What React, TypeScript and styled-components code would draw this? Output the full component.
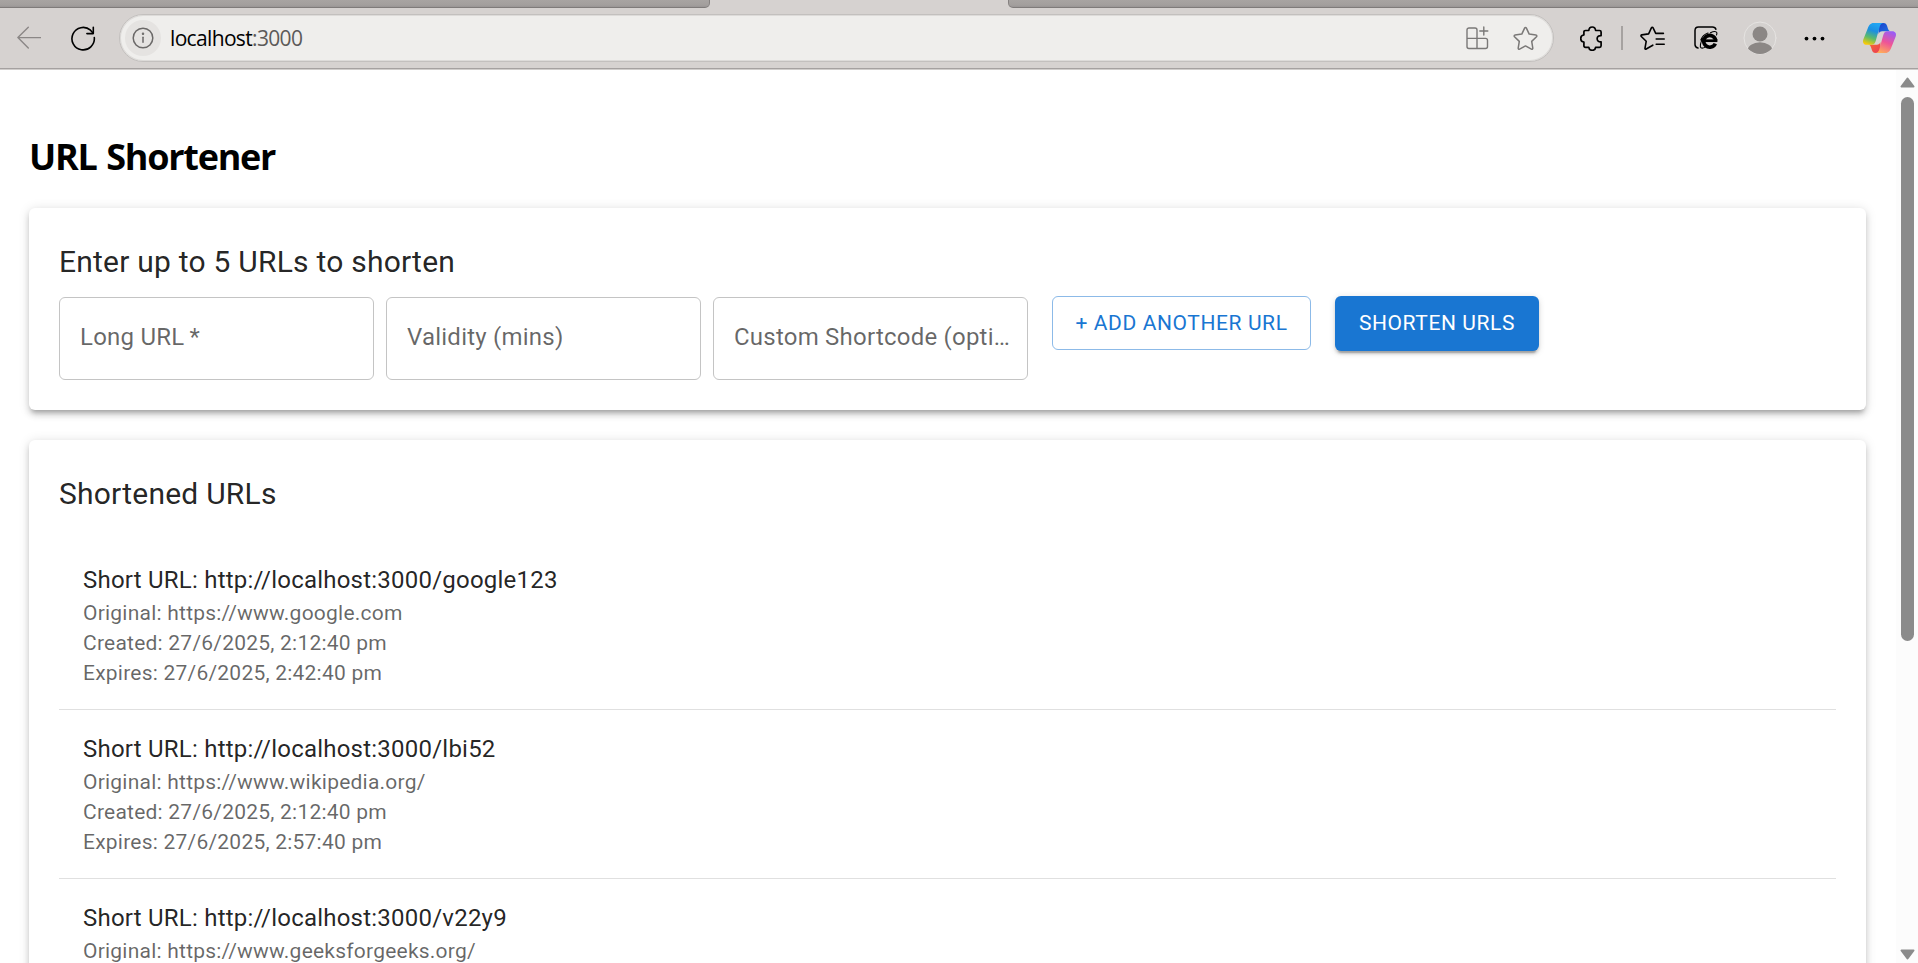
import React from 'react';
import styled, { createGlobalStyle } from 'styled-components';

const GlobalStyle = createGlobalStyle`
  *, *::before, *::after { box-sizing: border-box; }
  body { margin: 0; background: #fff; overflow: hidden; }
`;

const Browser = styled.div`
  display: flex;
  flex-direction: column;
  height: 963px;
  overflow: hidden;
  background: #fff;
`;

const TabStrip = styled.div`
  display: flex;
  justify-content: space-between;
  flex: none;
  height: 8px;
  background: #d6d2d0;
`;

const InactiveTabs = styled.div<{ $width: number; $side: 'left' | 'right' }>`
  width: ${(p) => p.$width}px;
  background: linear-gradient(#a8a4a2, #a39f9d 5px, #999594);
  border-bottom: 1px solid #7f7b7a;
  ${(p) =>
    p.$side === 'left'
      ? 'border-right: 1px solid #858180; border-bottom-right-radius: 5px;'
      : 'border-left: 1px solid #858180; border-bottom-left-radius: 5px;'}
`;

const Toolbar = styled.div`
  display: flex;
  align-items: center;
  flex: none;
  height: 62px;
  padding: 0 20px 1px 17px;
  background: #d6d2d0;
  border-bottom: 1px solid #d0cdcb;
  box-shadow: inset 0 -1px 0 #a5a1a0;
`;

const Icon = styled.svg<{ $gap?: number }>`
  display: block;
  flex: none;
  margin-left: ${(p) => p.$gap ?? 0}px;
  fill: none;
  stroke-linecap: round;
  stroke-linejoin: round;
`;

const AddressBar = styled.div`
  display: flex;
  align-items: center;
  flex: none;
  width: 1435px;
  height: 48px;
  margin-left: 23px;
  padding: 0 15px 0 5px;
  border: 1px solid #c3c0be;
  border-radius: 24px;
  background: #efeeec;
  box-shadow: inset 0 0 0 1px #dddbd9;
`;

const SiteInfo = styled.div`
  display: flex;
  align-items: center;
  justify-content: center;
  width: 36px;
  height: 36px;
  border-radius: 50%;
  background: #e5e3e1;
`;

const Address = styled.div`
  flex: 1;
  margin-left: 9px;
  font: 21px/28px 'Open Sans', sans-serif;
  letter-spacing: -0.66px;
  color: #000;
`;

const Port = styled.span`
  color: #5c5a59;
`;

const Separator = styled.div`
  width: 2px;
  height: 24px;
  margin-left: 18px;
  background: #a6a2a0;
`;

const Viewport = styled.div`
  display: flex;
  flex: 1;
  min-height: 0;
`;

const Page = styled.main`
  flex: 1;
  padding: 66px 30px 0 29px;
  overflow: hidden;
`;

const PageTitle = styled.h2`
  margin: 0 0 30px;
  height: 42px;
  font: 700 36px/41px 'Open Sans', sans-serif;
  letter-spacing: -1.25px;
  word-spacing: 1.5px;
  color: #000;
`;

const Card = styled.section`
  margin-bottom: 30px;
  padding: 30px;
  border-radius: 6px;
  background: #fff;
  box-shadow: 0 4.5px 4.5px -3px rgba(0, 0, 0, 0.2), 0 4.5px 6px 0 rgba(0, 0, 0, 0.14),
    0 1.5px 12px 0 rgba(0, 0, 0, 0.12);
`;

const CardTitle = styled.h6`
  margin: 0;
  font: 400 30px/48px Roboto, sans-serif;
  letter-spacing: 0.225px;
  color: rgba(0, 0, 0, 0.87);
`;

const FormRow = styled.div`
  display: flex;
  align-items: flex-start;
  margin-top: 10px;
`;

const Field = styled.div`
  width: 315px;
  height: 83px;
  margin: 1px 12px 0 0;
  padding: 22px 17px 0 20px;
  border: 1px solid #c4c4c4;
  border-radius: 6px;
`;

const FieldLabel = styled.div`
  overflow: hidden;
  white-space: nowrap;
  text-overflow: ellipsis;
  font: 400 24px/34px Roboto, sans-serif;
  letter-spacing: 0.225px;
  color: rgba(0, 0, 0, 0.6);
`;

const Button = styled.button<{ $filled?: boolean; $width: number }>`
  width: ${(p) => p.$width}px;
  height: ${(p) => (p.$filled ? 55 : 54)}px;
  margin: 0 12px;
  padding: ${(p) => (p.$filled ? '0 0 2px' : '0')};
  border: ${(p) => (p.$filled ? '0' : '1px solid rgba(25, 118, 210, 0.5)')};
  border-radius: 6px;
  background: ${(p) => (p.$filled ? '#1976d2' : 'transparent')};
  color: ${(p) => (p.$filled ? '#fff' : '#1976d2')};
  font: 400 21px/36px Roboto, sans-serif;
  letter-spacing: 0.6px;
  white-space: nowrap;
  box-shadow: ${(p) =>
    p.$filled
      ? '0 4.5px 1.5px -3px rgba(0,0,0,.2), 0 3px 3px 0 rgba(0,0,0,.14), 0 1.5px 7.5px 0 rgba(0,0,0,.12)'
      : 'none'};
`;

const List = styled.ul`
  list-style: none;
  margin: 23px 0 0;
  padding: 0;
`;

const ListItem = styled.li`
  height: 169px;
  padding: 21px 24px;
  border-bottom: 1px solid rgba(0, 0, 0, 0.12);
`;

const Primary = styled.div`
  font: 400 24px/36px Roboto, sans-serif;
  letter-spacing: 0.225px;
  color: rgba(0, 0, 0, 0.87);
`;

const Secondary = styled.div`
  font: 400 21px/30px Roboto, sans-serif;
  letter-spacing: 0.225px;
  color: rgba(0, 0, 0, 0.6);
`;

const Scrollbar = styled.div`
  display: flex;
  flex-direction: column;
  align-items: center;
  flex: none;
  width: 22px;
  padding: 7px 0 3px 1px;
  background: #fcfcfc;
`;

const Thumb = styled.div`
  width: 13px;
  height: 544px;
  margin: 9px 0 auto;
  border-radius: 7px;
  background: #8b8b8b;
`;

interface Entry {
  code: string;
  original: string;
  created?: string;
  expires?: string;
}

const entries: Entry[] = [
  {
    code: 'google123',
    original: 'https://www.google.com',
    created: '27/6/2025, 2:12:40 pm',
    expires: '27/6/2025, 2:42:40 pm',
  },
  {
    code: 'lbi52',
    original: 'https://www.wikipedia.org/',
    created: '27/6/2025, 2:12:40 pm',
    expires: '27/6/2025, 2:57:40 pm',
  },
  { code: 'v22y9', original: 'https://www.geeksforgeeks.org/' },
];

const BackIcon = () => (
  <Icon width="24" height="24" viewBox="0 0 24 24" stroke="#8b8786" strokeWidth="1.4">
    <path d="M11.3 1.3.9 11.6 11.3 22M1 11.6h22.5" />
  </Icon>
);

const ReloadIcon = () => (
  <Icon $gap={30} width="25" height="25" viewBox="0 0 25 25" stroke="#000" strokeWidth="1.6">
    <path d="M23.300 11.500A11.200 11.200 0 1 1 19.500 4.200L22 7" />
    <path d="M22.300 1.200v6.400H15.900" />
  </Icon>
);

const InfoIcon = () => (
  <Icon width="22" height="22" viewBox="0 0 22 22" stroke="#6b6968" strokeWidth="1.5">
    <circle cx="11" cy="11" r="9.8" />
    <path d="M11 10.2v5" />
    <circle cx="11" cy="6.8" r=".5" fill="#6b6968" />
  </Icon>
);

const AppsIcon = () => (
  <Icon width="23" height="24" viewBox="0 0 23 24" stroke="#7a7877" strokeWidth="1.4">
    <path d="M11 12.4V4a2 2 0 0 0-2-2H3a2 2 0 0 0-2 2v16.500a2 2 0 0 0 2 2h16.500a2 2 0 0 0 2-2v-6.100a2 2 0 0 0-2-2H1M11 12.400v10.100M17.800 1v8M13.800 5h8" />
  </Icon>
);

const StarIcon = () => (
  <Icon $gap={24} width="25" height="25" viewBox="0 0 25 25" stroke="#7a7877" strokeWidth="1.5">
    <path d="M12.500 1.400c.5 0 .7.3.9.7l2.800 6 6.700.9c.9.1 1.200 1 .6 1.700l-4.800 4.700 1.100 6.700c.1.900-.6 1.400-1.400 1l-5.900-3.200-5.900 3.200c-.8.4-1.500-.1-1.400-1l1.100-6.700-4.800-4.700c-.6-.7-.3-1.600.6-1.700l6.700-.9 2.800-6c.2-.4.4-.7.9-.7Z" />
  </Icon>
);

const PuzzleIcon = () => (
  <Icon $gap={26} width="23" height="25" viewBox="0 0 23 25" stroke="#000" strokeWidth="1.7">
    <path d="M5.500 4.500h3.300c.4-4.700 6.400-4.700 6.800 0h3.900c1 0 1.600.6 1.600 1.600v3.500c-5.300-.4-5.300 6.700 0 6.300v3.800c0 1-.6 1.600-1.600 1.600h-3.900c-.4 4-6.400 4-6.800 0H5.500c-1 0-1.600-.6-1.600-1.600V16c-4.200-.3-4.200-6.700 0-7V6.100c0-1 .6-1.600 1.600-1.600Z" />
  </Icon>
);

const FavoritesIcon = () => (
  <Icon $gap={17} width="25" height="25" viewBox="0 0 25 25" stroke="#000" strokeWidth="1.6">
    <path d="M12.800 19.200 6.200 23c-.7.4-1.400-.1-1.200-.9l1.200-6.800L1.300 10.500c-.6-.6-.3-1.500.5-1.600l6.800-1 2.800-6c.4-.8 1.300-.8 1.700 0l2.600 5.500h7.700M16.200 13h8M16.200 18.200h8" />
  </Icon>
);

const IEModeIcon = () => (
  <Icon $gap={29} width="26" height="25" viewBox="0 0 26 25" stroke="#000" strokeWidth="1.5">
    <path d="M4 22C1.700 21.600 1 20.800 1 18.500V4.500C1 2.300 2.300 1 4.500 1h14c2 0 3 .9 3.400 2.300" />
    <path d="M21.300 17.600A6 5.900 0 1 1 21.700 14.500" strokeWidth="3.600" strokeLinecap="butt" />
    <path d="M10.500 14.700H23.400" strokeWidth="2.700" strokeLinecap="butt" />
    <path d="M16.500 6.700c3.300-1.700 5.800-1.600 6.300-.1.200.7.100 1.500-.3 2.400M8.800 12.500c-2.500 4.100-3.100 8.300-1.800 9.300 1 .7 2.600.3 4.300-.7M14 7C10.500 8.200 8 10.700 6.800 14" strokeWidth="1.100" />
  </Icon>
);

const AvatarIcon = () => (
  <Icon $gap={23} width="34" height="34" viewBox="0 0 34 34">
    <defs>
      <clipPath id="avatar">
        <circle cx="17" cy="17" r="16" />
      </clipPath>
    </defs>
    <circle cx="17" cy="17" r="16" fill="#d4d1cf" stroke="#e6e4e2" />
    <g clipPath="url(#avatar)" fill="#8b8785">
      <circle cx="17" cy="13" r="7.500" />
      <ellipse cx="17" cy="30" rx="12.500" ry="8.700" />
    </g>
  </Icon>
);

const MoreIcon = () => (
  <Icon $gap={27} width="22" height="24" viewBox="0 0 22 24">
    <g fill="#000">
      <circle cx="2.500" cy="12.600" r="1.900" />
      <circle cx="10.500" cy="12.600" r="1.900" />
      <circle cx="18.500" cy="12.600" r="1.900" />
    </g>
  </Icon>
);

const CopilotIcon = () => (
  <Icon $gap={36} width="35" height="32" viewBox="0 0 35 32">
    <defs>
      <linearGradient id="cpA" x1=".6" y1="0" x2=".25" y2="1">
        <stop offset="0" stopColor="#20a7f4" />
        <stop offset=".35" stopColor="#1c8fe0" />
        <stop offset=".68" stopColor="#5cbb6a" />
        <stop offset="1" stopColor="#fbcb05" />
      </linearGradient>
      <linearGradient id="cpB" x1=".7" y1="0" x2=".3" y2="1">
        <stop offset="0" stopColor="#9a5cf5" />
        <stop offset=".5" stopColor="#ee5497" />
        <stop offset="1" stopColor="#ffac5a" />
      </linearGradient>
      <linearGradient id="cpC" x1="0" y1="0" x2="1" y2="1">
        <stop offset="0" stopColor="#1a3fc9" />
        <stop offset="1" stopColor="#1e78e8" />
      </linearGradient>
      <linearGradient id="cpD" x1="0" y1="0" x2="1" y2="1">
        <stop offset="0" stopColor="#f9692f" />
        <stop offset="1" stopColor="#e93b58" />
      </linearGradient>
    </defs>
    <path d="M16 1h5.500c2 0 3 1.100 3.600 3l.8 2.500c.5 1.500 1.100 2.500 2.700 2.700h-8.400c-2 0-3 1-3.500 2.800Z" fill="url(#cpC)" />
    <path d="M19 31h-5.500c-2 0-3-1.100-3.600-3l-.8-2.500c-.5-1.500-1.100-2.500-2.700-2.700h8.400c2 0 3-1 3.500-2.800Z" fill="url(#cpD)" />
    <path d="M22 1H11.500C8.500 1 6.800 3.500 5.900 6L1.300 17.500C.3 20.500 1.800 22.800 4.700 22.800h4.800c2.500 0 3.500-1.500 4.200-3.800L17.600 5C18.300 2.500 19.500 1 22 1Z" fill="url(#cpA)" />
    <path d="M13 31h10.500c3 0 4.700-2.500 5.600-5l4.600-11.500c1-3-.5-5.300-3.400-5.300h-4.800c-2.500 0-3.500 1.500-4.200 3.800L17.400 27c-.7 2.500-1.900 4-4.400 4Z" fill="url(#cpB)" />
  </Icon>
);

const ScrollArrow = ({ down }: { down?: boolean }) => (
  <Icon width="15" height="11" viewBox="0 0 15 11">
    <path
      d={down ? 'M1.500 1.500h12L7.500 9.500Z' : 'M1.500 9.500h12L7.500 1.500Z'}
      fill="#8b8b8b"
      stroke="#8b8b8b"
      strokeWidth="2"
    />
  </Icon>
);

export default function App() {
  return (
    <>
      <GlobalStyle />
      <Browser>
        <TabStrip>
          <InactiveTabs $width={710} $side="left" />
          <InactiveTabs $width={910} $side="right" />
        </TabStrip>
        <Toolbar>
          <BackIcon />
          <ReloadIcon />
          <AddressBar>
            <SiteInfo>
              <InfoIcon />
            </SiteInfo>
            <Address>
              localhost<Port>:3000</Port>
            </Address>
            <AppsIcon />
            <StarIcon />
          </AddressBar>
          <PuzzleIcon />
          <Separator />
          <FavoritesIcon />
          <IEModeIcon />
          <AvatarIcon />
          <MoreIcon />
          <CopilotIcon />
        </Toolbar>
        <Viewport>
          <Page>
            <PageTitle>URL Shortener</PageTitle>
            <Card>
              <CardTitle>Enter up to 5 URLs to shorten</CardTitle>
              <FormRow>
                <Field>
                  <FieldLabel>Long URL&#8201;*</FieldLabel>
                </Field>
                <Field>
                  <FieldLabel>Validity (mins)</FieldLabel>
                </Field>
                <Field>
                  <FieldLabel>Custom Shortcode (optional)</FieldLabel>
                </Field>
                <Button $width={259}>+ ADD ANOTHER URL</Button>
                <Button $width={204} $filled>
                  SHORTEN URLS
                </Button>
              </FormRow>
            </Card>
            <Card>
              <CardTitle>Shortened URLs</CardTitle>
              <List>
                {entries.map((e) => (
                  <ListItem key={e.code}>
                    <Primary>Short URL: http://localhost:3000/{e.code}</Primary>
                    <Secondary>Original: {e.original}</Secondary>
                    {e.created && <Secondary>Created: {e.created}</Secondary>}
                    {e.expires && <Secondary>Expires: {e.expires}</Secondary>}
                  </ListItem>
                ))}
              </List>
            </Card>
          </Page>
          <Scrollbar>
            <ScrollArrow />
            <Thumb />
            <ScrollArrow down />
          </Scrollbar>
        </Viewport>
      </Browser>
    </>
  );
}
